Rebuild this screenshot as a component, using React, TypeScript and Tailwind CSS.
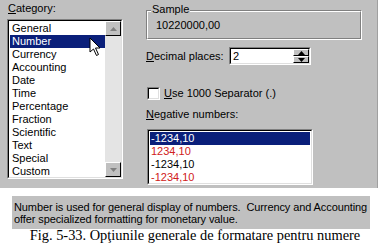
import React from "react";

const sunken =
  "border-t-[#808080] border-l-[#808080] border-b-white border-r-white border";
const inner =
  "border-t-black border-l-black border-b-[#dfdfdf] border-r-[#dfdfdf] border";

function Arrow({ up, color = "#808080" }: { up?: boolean; color?: string }) {
  return (
    <svg width="7" height="4" viewBox="0 0 7 4">
      {up ? (
        <polygon points="3.5,0 7,4 0,4" fill={color} />
      ) : (
        <polygon points="0,0 7,0 3.5,4" fill={color} />
      )}
    </svg>
  );
}

function Btn({ up, color, h }: { up?: boolean; color?: string; h: string }) {
  return (
    <div
      className={`${h} flex items-center justify-center bg-[#c0c0c0] border border-t-white border-l-white border-b-black border-r-black`}
    >
      <Arrow up={up} color={color} />
    </div>
  );
}

const cats = [
  "General",
  "Number",
  "Currency",
  "Accounting",
  "Date",
  "Time",
  "Percentage",
  "Fraction",
  "Scientific",
  "Text",
  "Special",
  "Custom",
];

export default function App() {
  return (
    <div
      className="w-[381px] h-[243px] bg-white overflow-hidden relative"
      style={{ fontFamily: "'Liberation Sans', Arial, sans-serif" }}
    >
      <div className="w-[378px] h-[188px] bg-[#c0c0c0] flex border-r border-r-[#a0a0a0] text-[11px] leading-[13px] text-black">
        {/* left column */}
        <div className="pl-[7px] pt-[2px]">
          <div className="pl-[1px] h-[17px]">
            <span className="underline">C</span>ategory:
          </div>
          <div className={`${sunken} w-[116px] h-[160px]`}>
            <div className={`${inner} w-full h-full bg-white flex`}>
              <div className="flex-1 pt-[1px] pl-[1px]">
                {cats.map((c, i) => (
                  <div
                    key={c}
                    className={`h-[13px] pl-[2px] relative ${
                      i === 1 ? "bg-[#0a1f7a] text-white" : ""
                    }`}
                  >
                    {c}
                    {i === 1 && (
                      <svg
                        className="absolute left-[79px] top-[2px]"
                        width="14"
                        height="20"
                        viewBox="0 0 14 20"
                      >
                        <polygon
                          points="1,1 1,15 4.5,12 7.5,18.5 9.5,17.5 6.5,11 11,11"
                          fill="white"
                          stroke="black"
                          strokeWidth="1"
                        />
                      </svg>
                    )}
                  </div>
                ))}
              </div>
              <div className="w-[16px] h-full flex flex-col bg-[#e4e4e4]">
                <Btn up h="h-[15px]" />
                <div className="flex-1" />
                <Btn h="h-[15px]" />
              </div>
            </div>
          </div>
        </div>

        {/* right column */}
        <div className="ml-[23px] pt-[10px] flex flex-col">
          <div className="relative w-[216px] h-[30px] border border-t-[#808080] border-l-[#808080] border-b-white border-r-white">
            <div className="absolute inset-0 border border-t-white border-l-white border-b-[#808080] border-r-[#808080]" />
            <span className="absolute left-[4px] top-[-8px] bg-[#c0c0c0] px-[1px]">
              Sample
            </span>
            <div className="absolute left-[9px] top-[8px]">10220000,00</div>
          </div>

          <div className="mt-[7px] flex items-center h-[18px]">
            <span className="w-[83px]">
              <span className="underline">D</span>ecimal places:
            </span>
            <div className={`${sunken} w-[82px] h-[18px]`}>
              <div className={`${inner} w-full h-full bg-white flex`}>
                <div className="flex-1 pl-[2px] leading-[14px]">2</div>
                <div className="w-[16px] flex flex-col">
                  <Btn up color="black" h="h-[8px]" />
                  <Btn color="black" h="h-[8px]" />
                </div>
              </div>
            </div>
          </div>

          <div className="mt-[22px] flex items-center h-[13px] pl-[1px]">
            <div className={`${sunken} w-[13px] h-[13px]`}>
              <div className={`${inner} w-full h-full bg-white`} />
            </div>
            <span className="ml-[4px]">
              <span className="underline">U</span>se 1000 Separator (.)
            </span>
          </div>

          <div className="mt-[8px] h-[13px]">
            <span className="underline">N</span>egative numbers:
          </div>

          <div className={`${sunken} ml-[1px] mt-[8px] w-[166px] h-[56px]`}>
            <div className={`${inner} w-full h-full bg-white pt-[1px] pl-[1px] pr-[1px]`}>
              <div className="h-[13px] bg-[#0a1f7a] text-white pl-[1px]">-1234,10</div>
              <div className="h-[13px] text-[#d02020] pl-[1px]">1234,10</div>
              <div className="h-[13px] pl-[1px]">-1234,10</div>
              <div className="h-[13px] text-[#d02020] pl-[1px]">-1234,10</div>
            </div>
          </div>
        </div>
      </div>

      <div className="mt-[8px] ml-[12px] w-[358px] h-[33px] bg-[#c0c0c0] text-[11px] leading-[12px] tracking-[-0.1px] pt-[5px] pl-[2px] whitespace-pre text-black">
        {"Number is used for general display of numbers.  Currency and Accounting\noffer specialized formatting for monetary value."}
      </div>

      <div
        className="text-center text-[14.4px] leading-[13px] text-black pl-[9px]"
        style={{ fontFamily: "'Liberation Serif', 'Times New Roman', serif" }}
      >
        Fig. 5-33. Opţiunile generale de formatare pentru numere
      </div>
    </div>
  );
}
